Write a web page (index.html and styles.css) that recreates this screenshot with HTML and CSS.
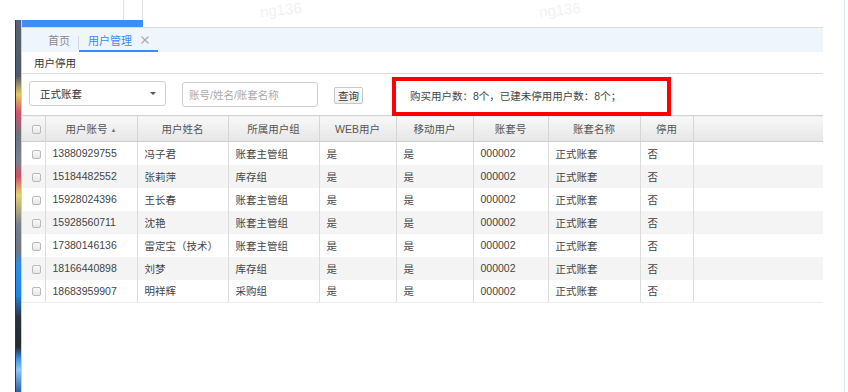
FILE: index.html
```html
<!doctype html>
<html>
  <head>
    <title>用户停用</title>
    <link rel="stylesheet" href="styles.css">
  </head>
  <body>
    <div class="screen">
      <div class="desk">
        <div class="top">
          <div class="peek"></div>
          <span class="mark mark-1">ng136</span>
          <span class="mark mark-2">ng136</span>
        </div>
        <div class="frame">
          <div class="strip"></div>
          <div class="main">
            <div class="bluebar"></div>
            <div class="tabs">
              <div class="tab">首页</div>
              <span class="sep"></span>
              <div class="tab active">
                用户管理
                <svg class="close" width="8" height="8" viewBox="0 0 8 8">
                  <path d="M0.5 0.5 L7.5 7.5 M7.5 0.5 L0.5 7.5" stroke="#aaa" stroke-width="1.2" fill="none"/>
                </svg>
              </div>
            </div>
            <div class="crumb">用户停用</div>
            <div class="toolbar">
              <div class="select">正式账套<span class="caret"></span></div>
              <input class="search" type="text" placeholder="账号/姓名/账套名称">
              <button class="btn">查询</button>
              <div class="notice">购买用户数：8个，已建未停用用户数：8个；</div>
            </div>
            <table class="grid">
              <colgroup>
                <col style="width:23px"><col style="width:92px"><col style="width:91px"><col style="width:91px"><col style="width:77px">
                <col style="width:77px"><col style="width:75px"><col style="width:92px"><col style="width:53px"><col style="width:130px">
              </colgroup>
              <thead>
                <tr>
                  <th class="ck"><span class="box"></span></th>
                  <th>用户账号<span class="sort">▲</span></th>
                  <th>用户姓名</th>
                  <th>所属用户组</th>
                  <th>WEB用户</th>
                  <th>移动用户</th>
                  <th>账套号</th>
                  <th>账套名称</th>
                  <th>停用</th>
                  <th class="fill"></th>
                </tr>
              </thead>
              <tbody>
                <tr><td class="ck"><span class="box"></span></td><td>13880929755</td><td>冯子君</td><td>账套主管组</td><td>是</td><td>是</td><td>000002</td><td>正式账套</td><td>否</td><td class="fill"></td></tr>
                <tr><td class="ck"><span class="box"></span></td><td>15184482552</td><td>张莉萍</td><td>库存组</td><td>是</td><td>是</td><td>000002</td><td>正式账套</td><td>否</td><td class="fill"></td></tr>
                <tr><td class="ck"><span class="box"></span></td><td>15928024396</td><td>王长春</td><td>账套主管组</td><td>是</td><td>是</td><td>000002</td><td>正式账套</td><td>否</td><td class="fill"></td></tr>
                <tr><td class="ck"><span class="box"></span></td><td>15928560711</td><td>沈艳</td><td>账套主管组</td><td>是</td><td>是</td><td>000002</td><td>正式账套</td><td>否</td><td class="fill"></td></tr>
                <tr><td class="ck"><span class="box"></span></td><td>17380146136</td><td>雷定宝（技术）</td><td>账套主管组</td><td>是</td><td>是</td><td>000002</td><td>正式账套</td><td>否</td><td class="fill"></td></tr>
                <tr><td class="ck"><span class="box"></span></td><td>18166440898</td><td>刘梦</td><td>库存组</td><td>是</td><td>是</td><td>000002</td><td>正式账套</td><td>否</td><td class="fill"></td></tr>
                <tr><td class="ck"><span class="box"></span></td><td>18683959907</td><td>明祥辉</td><td>采购组</td><td>是</td><td>是</td><td>000002</td><td>正式账套</td><td>否</td><td class="fill"></td></tr>
              </tbody>
            </table>
          </div>
        </div>
      </div>
      <div class="edge"></div>
    </div>
  </body>
</html>
```

FILE: styles.css
```css
* { margin: 0; padding: 0; box-sizing: border-box; }
body { background: #fff; font: 10.5px "Liberation Sans", "Noto Sans CJK SC", sans-serif; color: #444; overflow: hidden; }

.screen { display: flex; height: 392px; }
.desk { width: 844px; }
.edge { flex: 1; border-left: 1px solid #dde3eb; }

/* window behind */
.top { height: 20px; position: relative; }
.peek { margin-left: 123px; width: 20px; height: 20px; border-left: 1px solid #e2e2e2; border-right: 1px solid #e2e2e2; }
.mark { position: absolute; top: 1px; font-size: 15px; line-height: 17px; color: #f2f2f2; transform: rotate(-6deg); }
.mark-1 { left: 260px; }
.mark-2 { left: 539px; }

.frame { display: flex; padding-left: 15px; height: 372px; }
.strip {
  width: 7px;
  border-left: 1px solid #2f3741;
  border-right: 1px solid #c9d1da;
  background: linear-gradient(to bottom,
    #5b6571 0%, #4e5967 15%, #e6c760 20%, #d2526a 25%, #6c7381 31%,
    #7b8290 38%, #d24f62 42%, #e8d272 47%, #7a808a 55%, #6f7784 62%,
    #2a8ef0 66%, #1f86ea 74%, #2a3038 80%, #252b33 88%, #3a90e8 91%,
    #8cc8f8 94%, #2b62a8 100%);
}
.main { width: 801px; }

.bluebar { width: 121px; height: 7px; background: #3f8cf5; }

/* tabs */
.tabs { display: flex; align-items: stretch; height: 25px; background: #eff5fd; border-top: 1px solid #dcdcdc; }
.tab { display: flex; align-items: center; padding: 0 8px 0 26px; font-size: 11px; color: #8a8a8a; }
.sep { width: 1px; height: 14px; background: #d3d8de; align-self: flex-end; margin-bottom: 2px; }
.tab.active { padding: 0 9px; color: #3d8af7; box-shadow: inset 0 -2px 0 #3d8af7; }
.close { margin-left: 9px; }

.crumb { height: 22px; line-height: 22px; padding-left: 12px; color: #333; border-bottom: 1px solid #dcdcdc; }

/* toolbar */
.toolbar { display: flex; align-items: flex-start; height: 41px; padding-left: 7px; }
.select {
  display: flex; justify-content: space-between; align-items: center;
  width: 137px; height: 25px; margin-top: 7px; padding: 0 9px 0 10px;
  border: 1px solid #cfcfcf; border-radius: 3px; color: #333;
}
.caret { width: 0; height: 0; border-top: 3px solid #555; border-left: 3px solid transparent; border-right: 3px solid transparent; }
.search {
  width: 136px; height: 25px; margin: 8px 0 0 16px; padding-left: 6px;
  border: 1px solid #cfcfcf; border-radius: 3px; font: inherit; color: #333; outline: none;
}
.search::placeholder { color: #aaa; }
.btn {
  width: 29px; height: 17px; margin: 13px 0 0 16px;
  border: 1px solid #c6c6c6; border-radius: 2px;
  background: linear-gradient(#ffffff, #eeeeee); font: inherit; color: #333;
}
.notice {
  position: relative; z-index: 1;
  width: 279px; height: 39px; margin: 3px 0 0 29px; padding-left: 14px;
  border: 4px solid #ff0000; line-height: 31px; color: #444;
}

/* grid */
.grid { width: 801px; table-layout: fixed; border-collapse: collapse; }
.grid th {
  height: 26px; font-weight: normal; color: #555; text-align: center;
  background: linear-gradient(#f8f8f8, #e6e6e6);
  border-top: 1px solid #d2d2d2; border-bottom: 1px solid #cccccc; border-right: 1px solid #d4d4d4;
}
.grid td { height: 23px; padding: 0 7px; border-right: 1px solid #dcdcdc; white-space: nowrap; overflow: hidden; }
.grid tbody tr:nth-child(even) td { background: #f4f4f4; }
.grid tbody tr:last-child td { border-bottom: 1px solid #ededed; }
.grid .fill { border-right: none; }
.grid .ck { padding: 0 0 0 10px; text-align: left; }
.box {
  display: inline-block; width: 9px; height: 9px; vertical-align: middle;
  border: 1px solid #b9b9b9; border-radius: 2px; background: linear-gradient(#fafafa, #e6e6e6);
}
.sort { font-size: 6px; color: #777; margin-left: 3px; vertical-align: 1px; }
```
